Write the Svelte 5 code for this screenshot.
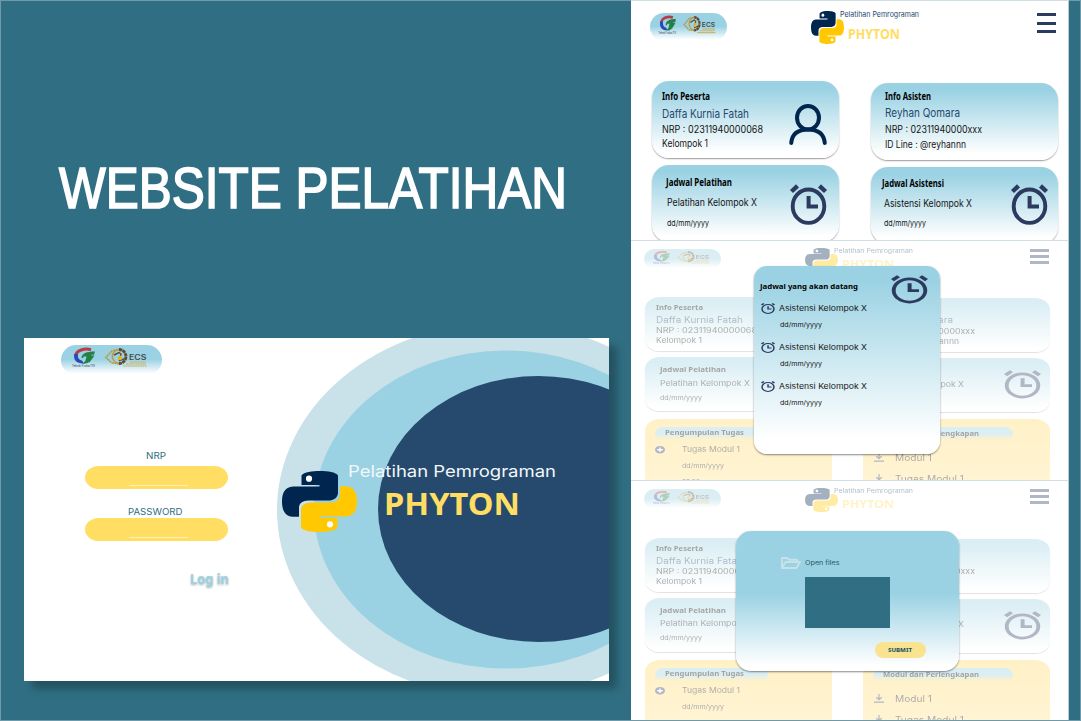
<script>
  // Line format: [text, width, font size, distance from previous baseline, indent, class]
  const tall = {
    name: 'tall',
    brand: [['Pelatihan Pemrograman', 79, 7.6, 16, 0, 'navy'], ['PHYTON', 52, 14.4, 22, 8, 'gold']],
    infoA: [['Info Peserta', 48, 9.8, 18.6, -0.5, 'b'], ['Daffa Kurnia Fatah', 87, 11.4, 18.2, -0.5, 'navy'], ['NRP : 02311940000068', 101, 10, 14.7, -0.5, ''], ['Kelompok 1', 46, 10, 15, -0.5, '']],
    infoB: [['Info Asisten', 46, 9.8, 16.6, 0, 'b'], ['Reyhan Qomara', 75, 11.4, 17, 0, 'navy'], ['NRP : 02311940000xxx', 97, 10, 16, 0, ''], ['ID Line : @reyhannn', 81, 10, 14.6, 0, '']],
    jadA: [['Jadwal Pelatihan', 66, 9.8, 20.6, 0, 'b'], ['Pelatihan Kelompok X', 90, 10, 20.2, 0.5, ''], ['dd/mm/yyyy', 42, 8.2, 20, 0.5, '']],
    jadB: [['Jadwal Asistensi', 62, 9.8, 20.4, 0.5, 'b'], ['Asistensi Kelompok X', 88, 10, 19.6, 2.5, ''], ['dd/mm/yyyy', 42, 8.2, 18.8, 2.5, '']]
  };
  const short = {
    name: 'short',
    brand: [['Pelatihan Pemrograman', 79, 5.6, 11.8, 0, 'navy'], ['PHYTON', 52, 9.8, 15.4, 8, 'gold']],
    infoA: [['Info Peserta', 47, 7, 13.2, 0, 'b'], ['Daffa Kurnia Fatah', 87, 8.4, 13, 0, 'navy'], ['NRP : 02311940000068', 101, 7.4, 10.3, 0, ''], ['Kelompok 1', 46, 7.4, 10.3, 0, '']],
    infoB: [['Info Asisten', 46, 7, 12, 0, 'b'], ['Reyhan Qomara', 75, 8.4, 12.6, 0, 'navy'], ['NRP : 02311940000xxx', 97, 7.4, 11.2, 0, ''], ['ID Line : @reyhannn', 81, 7.4, 10.2, 0, '']],
    jadA: [['Jadwal Pelatihan', 66, 7, 14.6, 0, 'b'], ['Pelatihan Kelompok X', 90, 7.4, 14.2, 0.5, ''], ['dd/mm/yyyy', 42, 6.2, 14.3, 0.5, '']],
    jadB: [['Jadwal Asistensi', 62, 7, 14.6, 0, 'b'], ['Asistensi Kelompok X', 88, 7.4, 13.8, 2, ''], ['dd/mm/yyyy', 42, 6.2, 14, 2, '']]
  };
  const upcoming = [
    { text: 'Asistensi Kelompok X', date: 'dd/mm/yyyy' },
    { text: 'Asistensi Kelompok X', date: 'dd/mm/yyyy' },
    { text: 'Asistensi Kelompok X', date: 'dd/mm/yyyy' }
  ];
</script>

{#snippet line(text, w, size, h, indent = 0, cls = '')}
  <svg class="line {cls}" width={w} height={h} style:margin-left="{indent}px">
    <text x="0" y={h} font-size={size} textLength={w} lengthAdjust="spacingAndGlyphs">{text}</text>
  </svg>
{/snippet}

{#snippet lines(list)}
  <div class="lines">
    {#each list as l}{@render line(l[0], l[1], l[2], l[3], l[4], l[5])}{/each}
  </div>
{/snippet}

{#snippet python()}
  <svg class="python" viewBox="0 0 75 61.2" preserveAspectRatio="none">
    <path fill="#00264f" d="M19.5 14V4.5C22 1 30 0 38 0S54 1.2 56 4.5V21.5C56 26.5 52 29.6 46 29.6H26.5C20.5 29.6 17 32.5 17 37V46H10.5C3.5 45.500 0 40 0 30.700S3.500 16 11 15.600H37.500V14Z" />
    <circle cx="27" cy="7.700" r="3.100" fill="#fff" />
    <g transform="rotate(180 37.5 30.6)">
      <path fill="#ffc800" d="M19.5 14V4.5C22 1 30 0 38 0S54 1.2 56 4.5V21.5C56 26.5 52 29.6 46 29.6H26.5C20.5 29.6 17 32.5 17 37V46H10.5C3.5 45.500 0 40 0 30.700S3.500 16 11 15.600H37.500V14Z" />
      <circle cx="27" cy="7.700" r="3.100" fill="#fff" />
    </g>
  </svg>
{/snippet}

{#snippet logos()}
  <div class="logos">
    <svg viewBox="0 0 101 30" preserveAspectRatio="none">
      <path d="M30 4.700C24 3 15 5 14.500 11" fill="none" stroke="#b93a48" stroke-width="3" />
      <path d="M13.300 9C12 15 16 19 23 18.500L21 15.500C18 15 16.500 13 17 9Z" fill="#2b48b5" />
      <path d="M20.500 13C21 8.500 25 6.500 34 6.500L33 9.800H30.500L28.500 16Q27 19 21.500 18.700L24.500 15.500 25.500 11.500H22.800L22 13Z" fill="#258047" />
      <path d="M28 10.500H33.500L31 14 28 18Z" fill="#238044" />
      <text x="11" y="22.300" font-size="3" textLength="23" lengthAdjust="spacingAndGlyphs" fill="#335">Teknik Fisika ITS</text>
      <path d="M60 3.800L51 6 44.800 12.500 51 18 60 19" fill="none" stroke="#b99b45" stroke-width="1.700" stroke-dasharray="2.200 .7" />
      <circle cx="58" cy="11.500" r="6.700" fill="none" stroke="#b99b45" stroke-width="1.600" />
      <path d="M58 4.500A7 7 0 0 1 58 18.500" fill="none" stroke="#5b4b3b" stroke-width="2.800" stroke-dasharray="3.200 .6" />
      <path d="M53 10L58 7.500 60 9 58.500 15.500 63 14" fill="none" stroke="#5b4b3b" stroke-width="1.400" />
      <path d="M57 12L61 10 60.500 15H57Z" fill="#e4b323" />
      <text x="68" y="15.300" font-size="7" font-weight="600" textLength="17.500" lengthAdjust="spacingAndGlyphs" fill="#444b4d">ECS</text>
      <path d="M69 17H85M65 19H85M62 21H86" stroke="#cbae59" stroke-width="1.200" stroke-dasharray="2 .4" />
    </svg>
  </div>
{/snippet}

{#snippet clock(color = '#2d3a60')}
  <svg class="clock" viewBox="0 0 37 41" preserveAspectRatio="none">
    <ellipse cx="18.500" cy="22.200" rx="15.800" ry="16.700" fill="none" stroke={color} stroke-width="3.900" />
    <path d="M1.500 7.500L7.500 1.800M29.500 1.800L35.500 7.500" stroke={color} stroke-width="4.400" />
    <path d="M18.600 12V22.400H28" fill="none" stroke={color} stroke-width="4" />
  </svg>
{/snippet}

{#snippet person()}
  <svg class="person" viewBox="0 0 38 41" preserveAspectRatio="none">
    <ellipse cx="19" cy="13.700" rx="11" ry="11.800" fill="none" stroke="#00264f" stroke-width="4" />
    <path d="M2.200 39C3 30 9 25.500 19 25.500S35 30 35.800 39" fill="none" stroke="#00264f" stroke-width="4" stroke-linecap="round" />
  </svg>
{/snippet}

{#snippet download()}
  <svg class="download" viewBox="0 0 10 9" preserveAspectRatio="none">
    <path d="M5 0V5.500M2.300 3.200L5 5.700 7.700 3.200M0 8.200H10" fill="none" stroke="#2d3a60" stroke-width="1.200" />
  </svg>
{/snippet}

{#snippet dashboard(d)}
  <div class="dash {d.name}">
    <header>
      {@render logos()}
      {@render python()}
      {@render lines(d.brand)}
      <div class="burger"><i></i><i></i><i></i></div>
    </header>
    <div class="cols">
      <div class="col">
        <section class="card info">{@render lines(d.infoA)}{#if d.name === 'tall'}{@render person()}{/if}</section>
        <section class="card jadwal">{@render lines(d.jadA)}{#if d.name === 'tall'}{@render clock()}{/if}</section>
        {#if d.name === 'short'}
          <section class="card yellow">
            <div class="tab tab-a">{@render line('Pengumpulan Tugas', 79, 7, 8.200, 10, 'b')}</div>
            <div class="task">
              <svg class="plus" viewBox="0 0 10 7.500" preserveAspectRatio="none"><ellipse cx="5" cy="3.750" rx="5" ry="3.750" fill="#2d3a60" /><path d="M2.200 3.750H7.800M5 1.500V6" stroke="#fff" stroke-width="1.400" /></svg>
              {@render lines([['Tugas Modul 1', 58, 7.600, 12, 0, ''], ['dd/mm/yyyy', 42, 6.200, 16.200, 0, ''], ['23.59', 18, 6.200, 16, 0.500, '']])}
            </div>
          </section>
        {/if}
      </div>
      <div class="col right">
        <section class="card info">{@render lines(d.infoB)}</section>
        <section class="card jadwal">{@render lines(d.jadB)}{@render clock()}</section>
        {#if d.name === 'short'}
          <section class="card yellow">
            <div class="tab tab-b">{@render line('Modul dan Perlengkapan', 96, 7, 8.800, 10, 'b')}</div>
            <div class="item">{@render download()}{@render line('Modul 1', 37, 8.400, 8, 10.500, '')}</div>
            <div class="item">{@render download()}{@render line('Tugas Modul 1', 69, 8.400, 8, 10.500, '')}</div>
          </section>
        {/if}
      </div>
    </div>
  </div>
{/snippet}

<main>
  <div class="left">
    <h1>{@render line('WEBSITE PELATIHAN', 508, 57, 207, 0, 'title')}</h1>
    <div class="login">
      <svg class="rings" viewBox="0 0 585 343">
        <ellipse cx="476" cy="172" rx="223" ry="187" fill="#c9e1e8" />
        <ellipse cx="482" cy="171.500" rx="192" ry="159" fill="#9bd2e3" />
        <ellipse cx="514.500" cy="171" rx="160.500" ry="133" fill="#26496e" />
      </svg>
      <div class="form">
        {@render logos()}
        <div class="label">{@render line('NRP', 20, 9, 84.500, 0, 'teal')}</div>
        <div class="field"><u></u></div>
        <div class="label">{@render line('PASSWORD', 54.500, 9, 25.500, 0, 'teal')}</div>
        <div class="field second"><u></u></div>
        <div class="go">{@render line('Log in', 39, 13.800, 42.500, 0, 'login-text')}</div>
      </div>
      <div class="hero">
        {@render python()}
        {@render lines([['Pelatihan Pemrograman', 208, 16.300, 6, 0, 'pale'], ['PHYTON', 136, 31, 38, 36.500, 'gold']])}
      </div>
    </div>
  </div>

  <div class="right-side">
    <article>{@render dashboard(tall)}</article>
    <article>
      <div class="faded">{@render dashboard(short)}</div>
      <div class="modal schedule">
        <div class="modal-head">{@render line('Jadwal yang akan datang', 98, 7.600, 23, -0.500, 'b')}{@render clock()}</div>
        {#each upcoming as u}
          <div class="event">
            {@render clock()}
            {@render lines([[u.text, 88, 7.400, 8, 0, ''], [u.date, 42, 6.200, 15.700, 0.500, '']])}
          </div>
        {/each}
      </div>
    </article>
    <article>
      <div class="faded third">{@render dashboard(short)}</div>
      <div class="modal upload">
        <div class="open">
          <svg class="folder" viewBox="0 0 20 12" preserveAspectRatio="none"><path d="M1 11V1H6L8 2.700H16V4.800M1 11L4.500 5H19L15.500 11Z" fill="none" stroke="#c9e1e8" stroke-width="1.900" stroke-linejoin="round" /></svg>
          {@render line('Open files', 34.500, 6, 8, 4, 'dark-teal')}
        </div>
        <div class="drop"></div>
        <button>{@render line('SUBMIT', 24, 5.600, 10.300, 0, 'dark-teal heavy')}</button>
      </div>
    </article>
  </div>
</main>

<style>
  :global(body) { margin: 0; }
  * { box-sizing: border-box; }
  main { width: 1081px; height: 721px; display: flex; overflow: hidden; background: #306f83; box-shadow: inset 0 0 0 1px #6e9aa9; font-family: Inter, sans-serif; }
  svg { display: block; flex: none; overflow: visible; }
  .line { fill: #151515; }
  .line.b { font-family: 'Noto Sans', sans-serif; font-weight: 700; fill: #000; }
  .line.navy { fill: #26496e; }
  .line.gold { fill: #ffde63; font-family: 'Noto Sans', sans-serif; font-weight: 700; }
  .line.teal { fill: #306f83; }
  .line.dark-teal { fill: #24586a; }
  .line.heavy { font-family: 'Noto Sans', sans-serif; font-weight: 800; }
  .line.pale { fill: #f2f7fa; }
  .line.title { fill: #fff; stroke: #fff; stroke-width: 1.700px; font-family: 'Liberation Sans', sans-serif; font-weight: 400; }
  .line.login-text { fill: #9bd2e3; font-family: 'Noto Sans', sans-serif; font-weight: 700; filter: drop-shadow(0 1.500px 1px #0005); }
  .lines { display: flex; flex-direction: column; }

  .left { width: 631px; padding: 1px 0 0 24px; }
  h1 { margin: 0 0 0 35px; height: 337px; }
  .login { position: relative; width: 585px; height: 343px; background: #fff; box-shadow: 8px 8px 8px #0004; display: flex; }
  .rings { position: absolute; inset: 0; width: 585px; height: 343px; overflow: hidden; }
  .form { position: relative; width: 258px; padding: 7px 0 0 37px; }
  .logos { width: 77px; height: 28px; flex: none; border-radius: 999px; background: linear-gradient(#9bd2e3 48%, #fff 95%); }
  .logos svg { width: 100%; height: 100%; }
  .form .logos { width: 101px; height: 30px; margin-bottom: -1px; }
  .label { display: flex; justify-content: center; width: 143px; margin-left: 23px; }
  .field { width: 143px; height: 23px; margin: 7px 0 0 24px; border-radius: 14px/11.500px; background: #ffde63; display: flex; justify-content: center; align-items: flex-end; }
  .field.second { margin-top: 4px; }
  .field u { width: 59px; height: 1px; margin: 0 0 3px 3px; background: #fff0b5; }
  .go { padding-left: 129px; }
  .hero { position: relative; display: flex; padding-top: 133px; }
  .hero .python { width: 75px; height: 61px; margin-right: -9.500px; }

  .right-side { width: 438px; }
  article { position: relative; height: 240px; overflow: hidden; background: #fff; border-top: 1px solid #cfdfe4; border-right: 1px solid #b5cdd5; }
  .faded { opacity: 0.36; }
  .third .cols { padding-top: 0.6px; }
  header { display: flex; align-items: flex-start; height: 80px; padding-left: 19px; }
  .tall .logos { margin-top: 12px; }
  .tall .python { width: 33px; height: 33px; margin: 10px -4px 0 84px; }
  .burger { display: flex; flex-direction: column; justify-content: space-between; width: 19px; height: 20px; margin: 12px 0 0 118px; }
  .burger i { height: 3px; background: #2d3a60; }
  .cols { display: flex; gap: 32px; padding-left: 20.500px; }
  .col { width: 187px; flex: none; }
  .right { padding-top: 2px; }
  .card { display: flex; height: 76.500px; border-radius: 17px; padding-left: 10.500px; margin-bottom: 7.500px; background: linear-gradient(#9bd2e3 10%, #fff 92%); box-shadow: 0 1px 1.500px #0006; position: relative; }
  .right .card { padding-left: 14.500px; }
  .jadwal { padding-left: 14.500px; }
  .right .jadwal { padding-left: 10.500px; }
  .card .clock, .card .person { position: absolute; left: 138.500px; top: 19px; width: 37px; height: 41px; }
  .tall .person { top: 23px; width: 38px; height: 41px; left: 137.500px; }
  .right .card .clock { left: 140.500px; top: 17px; }

  .short header { height: 56px; padding-left: 13px; }
  .short .logos { height: 20px; margin-top: 8px; }
  .short .python { width: 33px; height: 24px; margin: 7px -4.500px 0 84px; }
  .short .burger { height: 15px; margin: 8px 0 0 117px; }
  .short .burger i { height: 2.600px; }
  .short .cols { padding-left: 14px; gap: 31px; }
  .short .right { padding-top: 1px; }
  .short .card { height: 54px; margin-bottom: 6px; border-radius: 15px/12px; box-shadow: 0 1px 1px #0005; }
  .short .right .card .clock { top: 12px; width: 37px; height: 28.500px; }
  .short .card.yellow { flex-direction: column; height: 120px; margin-top: 8px; padding: 8px 0 0 10px; background: linear-gradient(#ffd965, #ffe9a8); box-shadow: none; }
  .short .right .card.yellow { margin-top: 7px; }
  .tab { height: 13px; border-radius: 8px 8px 5px 5px; background: linear-gradient(#9bd2e3 50%, transparent); flex: none; }
  .tab-a { width: 113px; }
  .tab-b { width: 140px; }
  .task { display: flex; }
  .plus { width: 10px; height: 7.500px; margin: 6px 16.500px 0 0; }
  .item { display: flex; align-items: flex-end; height: 21px; padding-left: 1px; }
  .download { width: 10px; height: 9px; margin-bottom: -1px; }

  .modal { position: absolute; border-radius: 13px; background: linear-gradient(#9bd2e3 8%, #fff 92%); box-shadow: 0 1px 2px #0007; }
  .schedule { left: 122.500px; top: 25px; width: 186.500px; height: 188px; padding-left: 7px; }
  .modal-head { display: flex; height: 37px; }
  .modal-head .clock { width: 37px; height: 28.500px; margin: 8.500px 0 0 33px; }
  .event { display: flex; height: 39px; }
  .event .clock { width: 14px; height: 11px; margin-right: 4.500px; }
  .upload { left: 105px; top: 49.500px; width: 222.500px; height: 140px; padding-left: 45px; border-radius: 15px; background: linear-gradient(#9bd2e3 45%, #fff 96%); }
  .open { display: flex; padding-top: 26.500px; height: 46.500px; }
  .folder { width: 20px; height: 12px; }
  .drop { width: 85px; height: 51px; margin-left: 24px; background: #306f83; }
  button { display: flex; justify-content: center; width: 51.500px; height: 16.500px; padding: 0; margin: 13.500px 0 0 93.500px; border: 0; border-radius: 9px; background: #f9e391; }
</style>
